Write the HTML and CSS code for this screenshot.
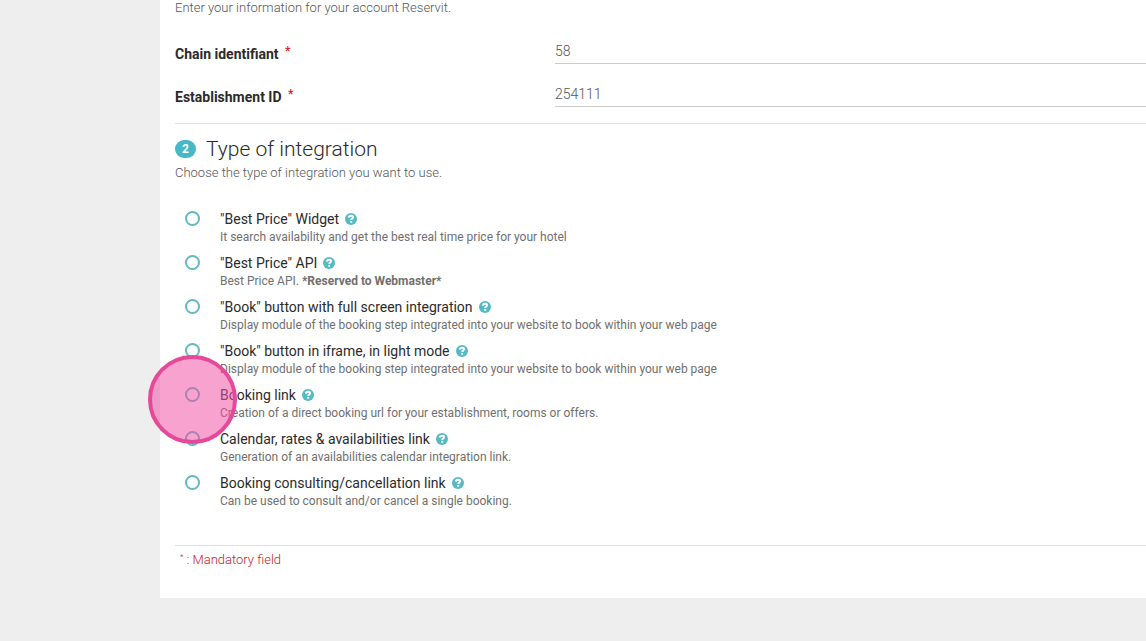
FILE: index.html
```html
<!DOCTYPE html>
<html lang="en">
<head>
    <meta charset="UTF-8">
    <meta name="viewport" content="width=device-width, initial-scale=1.0">
    <title>Reservit</title>
    <link rel="stylesheet" href="styles.css">
</head>
<body>
    <svg class="sprite" aria-hidden="true">
        <symbol id="help" viewBox="0 0 12 12">
            <circle cx="6" cy="6" r="6" fill="#56bac4"/>
            <path d="M3.9 4.6C4 3.4 4.9 2.8 6.1 2.8c1.2 0 2 .6 2 1.5 0 1.4-1.9 1.3-1.9 2.8" fill="none" stroke="#fff" stroke-width="1.9"/>
            <rect x="5.2" y="7.9" width="2" height="1.8" fill="#fff"/>
        </symbol>
    </svg>
    <form class="panel">
        <p class="hint">Enter your information for your account Reservit.</p>
        <div class="fields">
            <div class="field">
                <label for="chain">Chain identifiant <span class="required">*</span></label>
                <input type="text" id="chain" value="58">
            </div>
            <div class="field">
                <label for="establishment">Establishment ID <span class="required">*</span></label>
                <input type="text" id="establishment" value="254111">
            </div>
        </div>
        <section class="step">
            <h2><span class="badge">2</span>Type of integration</h2>
            <p class="hint">Choose the type of integration you want to use.</p>
            <div class="options">
                <div class="option">
                    <input type="radio" name="type" id="widget">
                    <div>
                        <div class="name"><label for="widget">"Best Price" Widget</label><button type="button" class="help" aria-label="Help"><svg><use href="#help"/></svg></button></div>
                        <p>It search availability and get the best real time price for your hotel</p>
                    </div>
                </div>
                <div class="option">
                    <input type="radio" name="type" id="api">
                    <div>
                        <div class="name"><label for="api">"Best Price" API</label><button type="button" class="help" aria-label="Help"><svg><use href="#help"/></svg></button></div>
                        <p>Best Price API. <b>*Reserved to Webmaster*</b></p>
                    </div>
                </div>
                <div class="option">
                    <input type="radio" name="type" id="fullscreen">
                    <div>
                        <div class="name"><label for="fullscreen">"Book" button with full screen integration</label><button type="button" class="help" aria-label="Help"><svg><use href="#help"/></svg></button></div>
                        <p>Display module of the booking step integrated into your website to book within your web page</p>
                    </div>
                </div>
                <div class="option">
                    <input type="radio" name="type" id="iframe">
                    <div>
                        <div class="name"><label for="iframe">"Book" button in iframe, in light mode</label><button type="button" class="help" aria-label="Help"><svg><use href="#help"/></svg></button></div>
                        <p>Display module of the booking step integrated into your website to book within your web page</p>
                    </div>
                </div>
                <div class="option highlight">
                    <input type="radio" name="type" id="link">
                    <div>
                        <div class="name"><label for="link">Booking link</label><button type="button" class="help" aria-label="Help"><svg><use href="#help"/></svg></button></div>
                        <p>Creation of a direct booking url for your establishment, rooms or offers.</p>
                    </div>
                </div>
                <div class="option">
                    <input type="radio" name="type" id="calendar">
                    <div>
                        <div class="name"><label for="calendar">Calendar, rates &amp; availabilities link</label><button type="button" class="help" aria-label="Help"><svg><use href="#help"/></svg></button></div>
                        <p>Generation of an availabilities calendar integration link.</p>
                    </div>
                </div>
                <div class="option">
                    <input type="radio" name="type" id="consult">
                    <div>
                        <div class="name"><label for="consult">Booking consulting/cancellation link</label><button type="button" class="help" aria-label="Help"><svg><use href="#help"/></svg></button></div>
                        <p>Can be used to consult and/or cancel a single booking.</p>
                    </div>
                </div>
            </div>
        </section>
        <p class="mandatory"><sup>*</sup> : Mandatory field</p>
    </form>
</body>
</html>
```
FILE: styles.css
```css
*, *::after {
    box-sizing: border-box;
}
body {
    margin: 0;
    background-color: #eee;
    color: #2b2b2b;
    font-family: Roboto, sans-serif;
    font-size: 14px;
}
h2, p {
    margin: 0;
}
.sprite {
    display: none;
}
.panel {
    margin-left: 160px;
    padding: 0 0 30px 15px;
    background: white;
}
.hint {
    font-size: 13px;
    font-weight: 300;
    line-height: 16px;
    color: #555;
}
.fields {
    display: grid;
    gap: 18px;
    padding: 23px 0 16px;
}
.field {
    display: grid;
    grid-template-columns: 380px 1fr;
    align-items: end;
}
.field label {
    font-weight: 700;
    line-height: 20px;
}
.required {
    margin-left: 3px;
    color: #d9232e;
    font-size: 12px;
    line-height: 0;
    vertical-align: 4px;
}
.field input {
    width: 100%;
    height: 25px;
    padding: 0;
    border: none;
    border-bottom: 1px solid #ccc;
    background: none;
    color: #555;
    font: 300 14px Roboto, sans-serif;
    outline: none;
}
.step {
    padding: 12px 0 35px;
    border-top: 1px solid #e0e0e0;
    border-bottom: 1px solid #e0e0e0;
}
.step h2 {
    display: flex;
    align-items: center;
    gap: 10px;
    margin-bottom: 3px;
    font-size: 21px;
    font-weight: 300;
    line-height: 26px;
}
.badge {
    width: 21px;
    border-radius: 9px;
    background: #45b9c8;
    color: white;
    font-size: 12px;
    font-weight: 700;
    line-height: 18px;
    text-align: center;
}
.options {
    display: grid;
    gap: 8px;
    margin-top: 29px;
}
.option {
    display: flex;
    gap: 20px;
    padding-left: 10px;
    line-height: 18px;
    position: relative;
}
.option input {
    appearance: none;
    width: 15px;
    height: 15px;
    margin: 1px 0 0;
    border: 2px solid #62b9c0;
    border-radius: 50%;
}
.option p {
    color: #707070;
    font-size: 12px;
}
.name {
    display: flex;
    align-items: center;
    gap: 6px;
}
.help {
    display: flex;
    padding: 0;
    border: none;
    background: none;
    cursor: pointer;
}
.help svg {
    width: 12px;
    height: 12px;
}
/* click marker around the radio */
.highlight::after {
    content: "";
    position: absolute;
    z-index: 1;
    top: -31px;
    left: -27px;
    width: 89px;
    height: 89px;
    border: 4px solid #e6499a;
    border-radius: 50%;
    background: rgba(240, 80, 165, 0.53);
    pointer-events: none;
}
.mandatory {
    padding: 6px 0 0 5px;
    color: #c4202c;
    font-size: 13px;
    font-weight: 300;
    line-height: 16px;
}
.mandatory sup {
    font-size: 8px;
    line-height: 0;
}
```
